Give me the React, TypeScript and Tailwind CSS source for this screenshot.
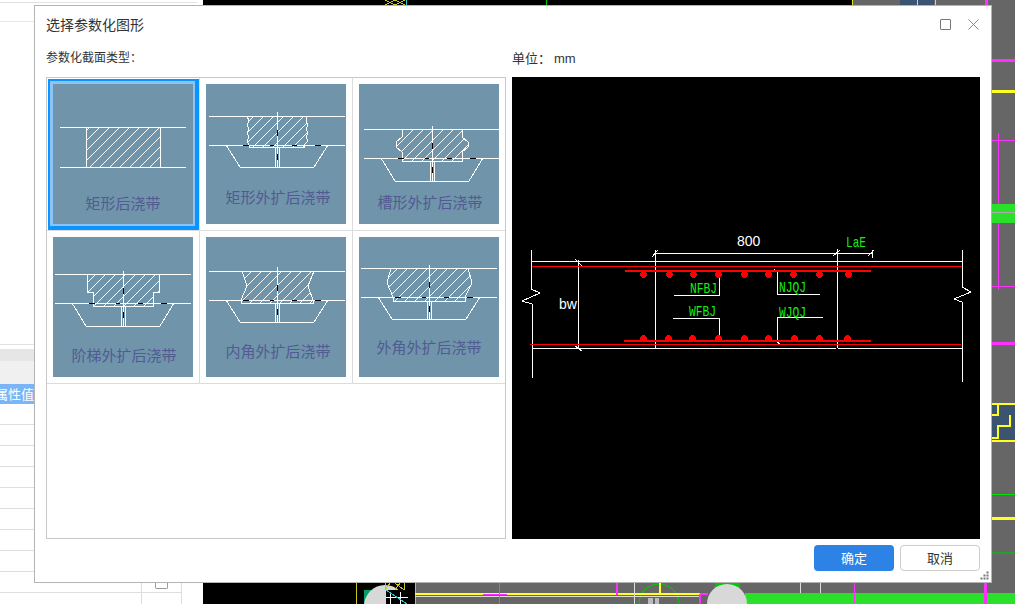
const FONT = "font-['Liberation_Sans','Noto_Sans_CJK_SC',sans-serif]";

type Thumb = {
  label: string;
  labelX: number;
  labelY: number;
  cx: number;
  y1: number;
  y2: number;
  x0: number;
  x1: number;
  top: number; // top of the centre line
  bottom: number; // bottom of the taper
  strip: number; // bottom of the hatch
  hatch: string;
  plain?: boolean;
};

const thumbs: Thumb[] = [
  {
    label: '矩形后浇带',
    labelX: 70,
    labelY: 125,
    cx: 70,
    y1: 43,
    y2: 83,
    x0: 7,
    x1: 133,
    top: 43,
    bottom: 83,
    strip: 83,
    hatch: '33,43 107,43 107,83 33,83',
    plain: true,
  },
  {
    label: '矩形外扩后浇带',
    labelX: 72,
    labelY: 119,
    cx: 71,
    y1: 32,
    y2: 61,
    x0: 3,
    x1: 139,
    top: 28,
    bottom: 83,
    strip: 63,
    hatch: '41,32 101,32 100,37 102,41 100,45 102,49 100,53 102,57 98,61 98,63 43,63 43,61 41,57 43,53 41,49 43,45 41,41 43,37',
  },
  {
    label: '槽形外扩后浇带',
    labelX: 71,
    labelY: 124,
    cx: 73,
    y1: 45,
    y2: 74,
    x0: 5,
    x1: 140,
    top: 42,
    bottom: 97,
    strip: 77,
    hatch: '43,45 103,45 103,53 109,58 109,63 103,68 103,77 43,77 43,68 37,63 37,58 43,53',
  },
  {
    label: '阶梯外扩后浇带',
    labelX: 71,
    labelY: 124,
    cx: 70,
    y1: 37,
    y2: 66,
    x0: 2,
    x1: 138,
    top: 34,
    bottom: 89,
    strip: 69,
    hatch: '34,37 106,37 106,55 100,55 100,69 40,69 40,55 34,55',
  },
  {
    label: '内角外扩后浇带',
    labelX: 72,
    labelY: 120,
    cx: 71,
    y1: 34,
    y2: 63,
    x0: 3,
    x1: 139,
    top: 30,
    bottom: 85,
    strip: 66,
    hatch: '36,34 108,34 102,49 107,63 107,66 35,66 35,63 41,49',
  },
  {
    label: '外角外扩后浇带',
    labelX: 70,
    labelY: 116,
    cx: 70,
    y1: 31,
    y2: 60,
    x0: 2,
    x1: 138,
    top: 28,
    bottom: 82,
    strip: 64,
    hatch: '32,31 109,31 113,46 106,60 106,64 34,64 34,60 28,46',
  },
];

function Thumbnail({ t, index }: { t: Thumb; index: number }) {
  const { cx, y1, y2, x0, x1, top, bottom, strip } = t;
  return (
    <svg width="140" height="140" viewBox="0 0 140 140" className="block bg-[#7094aa]">
      <defs>
        <pattern id={`hatch-${index}`} width="10" height="10" patternUnits="userSpaceOnUse">
          <path d="M0 10L10 0" stroke="#fff" strokeWidth="1" fill="none" />
        </pattern>
      </defs>
      <g shapeRendering="crispEdges" stroke="#fff" fill="none">
        <polygon points={t.hatch} fill={`url(#hatch-${index})`} />
        <path d={`M${x0} ${y1}H${x1}M${x0} ${y2}H${x1}`} />
        {!t.plain && (
          <>
            <path d={`M${cx} ${top}V${bottom + 1}`} />
            <path d={`M${cx - 2} ${strip}V${bottom}M${cx + 2} ${strip}V${bottom}`} />
            <path d={`M${cx - 51} ${y2}L${cx - 37} ${bottom}H${cx + 37}L${cx + 51} ${y2}`} />
            <path
              stroke="#000"
              d={`M${cx - 34} ${y2}h6M${cx - 7} ${y2}h4M${cx + 15} ${y2}h5M${cx + 38} ${y2}h6M${cx} ${y2 - 15}v6M${cx} ${y2 + 9}v6`}
            />
          </>
        )}
      </g>
      <text
        x={t.labelX}
        y={t.labelY}
        textAnchor="middle"
        fontSize="15"
        fontFamily="'Noto Sans CJK SC', sans-serif"
        fill="#515b92"
      >
        {t.label}
      </text>
    </svg>
  );
}

function ThumbCell({ t, index }: { t: Thumb; index: number }) {
  if (index === 0) {
    return (
      <div className="border-r border-b border-[#dcdcdc] pl-px pt-px">
        <div className="w-[151px] h-[151px] border-l-2 border-t-2 border-r-4 border-b-4 border-[#0a94ff]">
          <div className="border-l-[3px] border-t-[3px] border-r-2 border-b-2 border-[#8ec3f8]">
            <Thumbnail t={t} index={index} />
          </div>
        </div>
      </div>
    );
  }
  return (
    <div className={`h-[153px] pl-[6px] pt-[6px] border-b border-[#dcdcdc] ${index % 3 === 2 ? '' : 'border-r'}`}>
      <Thumbnail t={t} index={index} />
    </div>
  );
}

const topBolts = [643, 669, 693, 718, 744, 768, 793, 819, 848];
const bottomBolts = [643, 668, 692, 718, 744, 768, 794, 819, 847];

function Bolt({ x, y }: { x: number; y: number }) {
  return (
    <g fill="#ff0000" shapeRendering="crispEdges">
      <rect x={x - 2} y={y - 2} width="5" height="5" />
      <rect x={x - 1} y={y - 3} width="3" height="7" />
      <rect x={x - 3} y={y - 1} width="7" height="3" />
    </g>
  );
}

function CadLabel({ x, y, children }: { x: number; y: number; children: string }) {
  return (
    <text x={x} y={y} textLength={27} lengthAdjust="spacingAndGlyphs">
      {children}
    </text>
  );
}

function Section() {
  return (
    <svg width="468" height="462" viewBox="512 77 468 462" className="block bg-black">
      <g fill="none" stroke="#fff" shapeRendering="crispEdges">
        <path d="M531 261H962M532 348H836M838 348H962" />
        <path d="M531 250V289L540 293L522 301L532 304V378" />
        <path d="M962 250V287L971 292L954 299L962 302V382" />
        <path d="M578 260V349M575 259L582 266M575 346L582 351" />
        <path d="M655 250V348M837 249V348M655 253H872M872 250V258" />
        <path d="M652 257L658 250M833 256L840 250M868 256L874 250" />
        <path d="M674 295H719V275M673 318H719V337" />
        <path d="M820 294H777V272L774 269M823 317H777V342L780 344" />
      </g>
      <g fill="none" stroke="#ff0000" shapeRendering="crispEdges">
        <path d="M532 266H962M530 344H961" />
        <path strokeWidth="2" d="M625 271H871M624 341H871" />
      </g>
      {topBolts.map((x) => (
        <Bolt key={`t${x}`} x={x} y={274} />
      ))}
      {bottomBolts.map((x) => (
        <Bolt key={`b${x}`} x={x} y={338} />
      ))}
      <g fontFamily="'Liberation Sans', sans-serif" fontSize="14" fill="#fff">
        <text x="737" y="246">800</text>
        <text x="559" y="309">bw</text>
      </g>
      <g fontFamily="'Liberation Mono', monospace" fontSize="15" fill="#14f014">
        <text x="846" y="247" textLength={20} lengthAdjust="spacingAndGlyphs">LaE</text>
        <CadLabel x={690} y={293}>NFBJ</CadLabel>
        <CadLabel x={689} y={316}>WFBJ</CadLabel>
        <CadLabel x={779} y={292}>NJQJ</CadLabel>
        <CadLabel x={779} y={317}>WJQJ</CadLabel>
      </g>
    </svg>
  );
}

// the drawing program's canvas behind the dialog
function Canvas() {
  return (
    <svg width="812" height="604" viewBox="203 0 812 604" className="block shrink-0">
      <rect x="203" y="0" width="812" height="604" fill="#000" />
      <rect x="853" y="0" width="162" height="5" fill="#666" />
      <rect x="935" y="0" width="80" height="604" fill="#666" />
      <rect x="415" y="583" width="600" height="21" fill="#666" />
      <rect x="900" y="0" width="17" height="5" fill="#3b5570" />
      <rect x="918" y="0" width="16" height="5" fill="#3b5570" />
      <rect x="992" y="404" width="23" height="37" fill="#3b5570" />
      <rect x="745" y="593" width="270" height="11" fill="#2be02b" />
      <rect x="364" y="590" width="22" height="14" fill="#00a060" />
      <rect x="715" y="583" width="25" height="8" fill="#00c800" />
      <circle cx="385" cy="606" r="21" fill="#d8d8d8" />
      <rect x="386" y="590" width="22" height="14" fill="#000" />
      <circle cx="727" cy="604" r="20" fill="#d8d8d8" />
      <circle cx="659" cy="604" r="20" fill="none" stroke="#00d000" />
      <rect x="648" y="598" width="5" height="6" fill="#bbb" />
      <rect x="655" y="598" width="4" height="6" fill="#bbb" />
      <g fill="none" shapeRendering="crispEdges">
        <path d="M852 0V5M917 0V5M935 0V5" stroke="#e6e61e" />
        <path d="M385 0L395 5M395 0L405 5M385 5L395 0M395 5L405 0" stroke="#c8c81e" />
        <path d="M356 583V604M415 583V604M385 583V590M404 583V590M385 590L390 583M395 583L404 590M395 590L400 583" stroke="#c8c81e" />
        <path d="M390 592V604M400 592V604M386 597H408" stroke="#fff" />
        <path d="M386 590L407 604" stroke="#22c8d8" />
        <path d="M406 0V5" stroke="#22c8d8" />
        <path d="M546 0V5" stroke="#00c800" />
        <path d="M986 0V5" stroke="#ff30ff" strokeWidth="3" />
        <path d="M992 60H1015" stroke="#ff30ff" strokeWidth="3" />
        <path d="M992 91H1015M992 518H1015" stroke="#ffff22" strokeWidth="3" />
        <path d="M992 140H1015M998 133V290M992 286H1015" stroke="#ff30ff" />
        <path d="M992 213.5H1015" stroke="#2be02b" strokeWidth="19" />
        <path d="M992 212H1015" stroke="#aaa" />
        <path d="M992 343H1015" stroke="#ff30ff" strokeWidth="3" />
        <path d="M992 404H1015M992 441H1015M998 405V415H992M1010 415V426H998V438H992" stroke="#ffff22" strokeWidth="2" />
        <path d="M992 494H1015" stroke="#00e000" />
        <path d="M992 553H1015" stroke="#2a9d2a" strokeWidth="2" />
        <path d="M415 594H700" stroke="#ffff22" strokeWidth="2" />
        <path d="M415 596H700" stroke="#ddd" />
        <path d="M483 594H507M499 583V604" stroke="#ff30ff" />
        <path d="M617 583V595M700 594V604M700 594H708" stroke="#ff30ff" strokeWidth="2" />
        <path d="M854 583V604" stroke="#ff30ff" />
        <path d="M985.5 583V604" stroke="#ff30ff" strokeWidth="3" />
        <path d="M800 583V593M820 583V593M634 583V604" stroke="#ddd" />
        <path d="M660 583V593" stroke="#ffff22" strokeWidth="2" />
      </g>
    </svg>
  );
}

function Sheet() {
  return (
    <div className="w-[203px] h-[604px] shrink-0 bg-white flex flex-col">
      <div className="h-[3px] w-[197px] border-b border-[#e2e2e2]" />
      <div className="h-[19px] border-b border-[#e6e6e6]" />
      <div className="h-[322px]" />
      <div className="h-[5px] border-t border-[#e2e2e2]" />
      <div className="h-[12px] bg-[#e6e6e6]" />
      <div className="h-[23px] bg-[#f0f0f0]" />
      <div className="h-[20px] bg-[#7ab5f5] w-[34px] overflow-hidden flex justify-end items-center text-[13px] leading-none text-white whitespace-nowrap">
        属性值
      </div>
      {Array.from({ length: 8 }).map((_, i) => (
        <div key={i} className="h-[21px] border-b border-[#dedede] shrink-0" />
      ))}
      <div className="h-[21px] w-[182px] border-b border-r border-[#dedede] shrink-0 flex">
        <div className="w-[142px] h-full border-r border-[#dedede]" />
        <div className="ml-[13px] w-[13px] h-[9px] mt-[8px] border border-t-0 border-[#999] rounded-b-[2px]" />
      </div>
      <div className="h-[11px] w-[182px] border-r border-[#dedede] shrink-0">
        <div className="w-[142px] h-full border-r border-[#dedede]" />
      </div>
    </div>
  );
}

export default function App() {
  return (
    <div className={`relative w-[1015px] h-[604px] overflow-hidden flex ${FONT}`}>
      <Sheet />
      <Canvas />

      <div className="absolute left-[34px] top-[5px] w-[958px] h-[578px] bg-white border border-[#b4b4b4] flex flex-col pl-[11px] pr-[11px]">
        <div className="h-[37px] flex items-center justify-between shrink-0">
          <span className="text-[14px] leading-none text-[#333]">选择参数化图形</span>
          <div className="flex items-center gap-[17px] pr-[1px] mt-[-1px]">
            <svg width="11" height="11" viewBox="0 0 11 11" fill="none" stroke="#777" strokeWidth="1">
              <rect x="0.5" y="0.5" width="10" height="10" rx="0.5" />
            </svg>
            <svg width="11" height="11" viewBox="0 0 11 11" fill="none" stroke="#888" strokeWidth="1">
              <path d="M0.5 0.5L10.5 10.5M10.5 0.5L0.5 10.5" />
            </svg>
          </div>
        </div>

        <div className="h-[30px] mb-[4px] flex items-center shrink-0 text-[12px] leading-none text-[#333]">
          <span className="w-[466px]">参数化截面类型：</span>
          <span className="w-[42px] text-[13px]">单位：</span>
          <span className="text-[13px]">mm</span>
        </div>

        <div className="flex gap-[6px] h-[462px] shrink-0">
          <div className="w-[460px] border border-[#c8c8c8]">
            <div className="grid grid-cols-[153px_153px_152px]">
              {thumbs.map((t, i) => (
                <ThumbCell key={t.label} t={t} index={i} />
              ))}
            </div>
          </div>
          <Section />
        </div>

        <div className="flex justify-end gap-[6px] pt-[6px]">
          <button className="w-[80px] h-[26px] rounded-[4px] bg-[#2d82e6] text-white text-[13px] leading-none">确定</button>
          <button className="w-[80px] h-[26px] rounded-[4px] bg-white border border-[#cccccc] text-[#333] text-[13px] leading-none">取消</button>
        </div>

        <svg width="10" height="10" viewBox="0 0 10 10" fill="#777" className="absolute right-[1px] bottom-[1px]">
          <rect x="6.5" y="0.5" width="2" height="2" />
          <rect x="3.5" y="3.5" width="2" height="2" />
          <rect x="6.5" y="3.5" width="2" height="2" />
          <rect x="0.5" y="6.5" width="2" height="2" />
          <rect x="3.5" y="6.5" width="2" height="2" />
          <rect x="6.5" y="6.5" width="2" height="2" />
        </svg>
      </div>
    </div>
  );
}
